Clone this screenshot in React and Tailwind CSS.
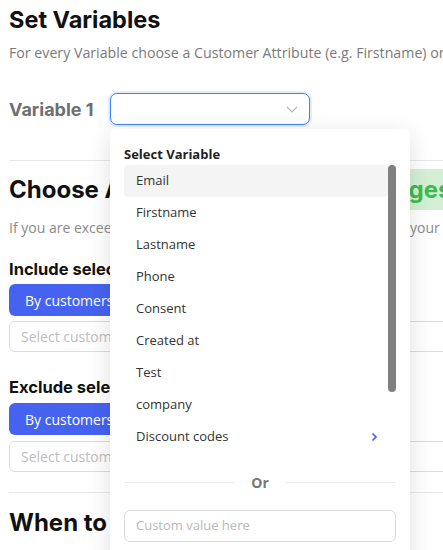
import React from "react";

const items = ["Email", "Firstname", "Lastname", "Phone", "Consent", "Created at", "Test", "company"];

export default function App() {
  return (
    <div className="relative w-[443px] h-[550px] overflow-hidden bg-white font-['Open_Sans',sans-serif]">
      <div className="w-[700px] pl-[9px]">
        <h1 className="h-[40px] pt-[4px] text-[23.5px] leading-[32px] font-bold text-[#111] font-['Inter',sans-serif]">Set Variables</h1>
        <p className="h-[28px] text-[14.2px] leading-[26px] text-[#7a7a7a] whitespace-nowrap">For every Variable choose a Customer Attribute (e.g. Firstname) or a custom value</p>
        <div className="mt-[25px] flex items-center h-[32px]">
          <span className="w-[101px] text-[18px] font-bold text-[#6f6f6f] font-['Inter',sans-serif]">Variable 1</span>
          <div className="relative w-[200px] h-[32px] rounded-[7px] border border-[#3b82f6] shadow-[0_0_0_2px_rgba(59,130,246,0.15)] bg-white">
            <svg className="absolute right-[11px] top-[12px]" width="12" height="7" viewBox="0 0 12 7" fill="none">
              <path d="M1 1l5 5 5-5" stroke="#b5b5b5" strokeWidth="1.1" />
            </svg>
          </div>
        </div>
        <div className="mt-[35px] h-px w-[600px] bg-[#e8e8e8]"></div>
        <div className="mt-[8px] flex items-center h-[41px] whitespace-nowrap">
          <h2 className="w-[312px] shrink-0 text-[24px] font-bold text-[#111] font-['Inter',sans-serif]">Choose Audience</h2>
          <div className="h-[41px] px-[10px] flex items-center bg-[#d3f0d5] rounded-[4px] text-[24px] font-bold text-[#3dbb4c] font-['Inter',sans-serif]">Messages/month</div>
        </div>
        <p className="mt-[7px] h-[22px] text-[14px] leading-[22px] text-[#8a8a8a] whitespace-nowrap">
          <span className="inline-block w-[401px] overflow-hidden align-top">If you are exceeding the number of messages included in</span>your subscription
        </p>
        <h3 className="mt-[19px] h-[22px] text-[16.5px] leading-[22px] font-bold text-[#111] font-['Inter',sans-serif]">Include selected customers</h3>
        <div className="mt-[4px] flex">
          <div className="h-[32px] px-[16px] flex items-center rounded-l-[6px] bg-[#4563f0] text-white text-[14px]">By customers</div>
          <div className="h-[32px] px-[16px] flex items-center rounded-r-[6px] bg-[#eef0f6] text-[#333] text-[14px]">By segments</div>
        </div>
        <div className="mt-[5px] h-[31px] w-[600px] rounded-[6px] border border-[#dcdcdc] flex items-center pl-[11px] text-[14px] text-[#bdbdbd]">Select customers...</div>
        <h3 className="mt-[24px] h-[22px] text-[16.5px] leading-[22px] font-bold text-[#111] font-['Inter',sans-serif]">Exclude selected customers</h3>
        <div className="mt-[5px] flex">
          <div className="h-[32px] px-[16px] flex items-center rounded-l-[6px] bg-[#4563f0] text-white text-[14px]">By customers</div>
          <div className="h-[32px] px-[16px] flex items-center rounded-r-[6px] bg-[#eef0f6] text-[#333] text-[14px]">By segments</div>
        </div>
        <div className="mt-[6px] h-[31px] w-[600px] rounded-[6px] border border-[#dcdcdc] flex items-center pl-[11px] text-[14px] text-[#bdbdbd]">Select customers...</div>
        <div className="mt-[20px] h-px w-[600px] bg-[#e8e8e8]"></div>
        <h2 className="mt-[14px] text-[24px] leading-[32px] font-bold text-[#111] font-['Inter',sans-serif]">When to send</h2>
      </div>

      <div className="absolute left-[110px] top-[129px] w-[300px] h-[440px] bg-white rounded-[6px] shadow-[0_6px_24px_rgba(0,0,0,0.13)] px-[14px] pt-[16px]">
        <div className="h-[20px] text-[13px] leading-[18px] font-bold text-[#222]">Select Variable</div>
        <div className="flex">
          <div className="w-[264px]">
            {items.map((it, i) => (
              <div key={it} className={(i === 0 ? "bg-[#f4f4f4] " : "") + "h-[32px] rounded-[4px] pl-[12px] flex items-center text-[13px] text-[#333]"}>{it}</div>
            ))}
            <div className="h-[32px] pl-[12px] pr-[10px] flex items-center justify-between text-[13px] text-[#333]">
              <span>Discount codes</span>
              <svg width="7" height="10" viewBox="0 0 7 10" fill="none">
                <path d="M1.5 1.5l3.5 3.5-3.5 3.5" stroke="#3b5bfd" strokeWidth="1.6" />
              </svg>
            </div>
          </div>
          <div className="w-[8px]">
            <div className="h-[227px] w-[8px] rounded-full bg-[#808080]"></div>
          </div>
        </div>
        <div className="mt-[20px] flex items-center h-[18px]">
          <div className="w-[111px] h-px bg-[#ececec]"></div>
          <div className="flex-1 text-center text-[14px] font-bold text-[#777]">Or</div>
          <div className="w-[111px] h-px bg-[#ececec]"></div>
        </div>
        <div className="mt-[19px] h-[32px] rounded-[6px] border border-[#dcdcdc] flex items-center pl-[11px] text-[13px] text-[#b8b8b8]">Custom value here</div>
      </div>
    </div>
  );
}
